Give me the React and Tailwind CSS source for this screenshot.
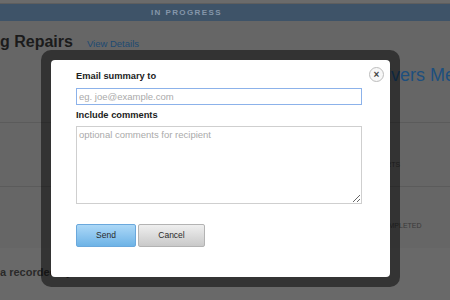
export default function App() {
  return (
    <div className="relative w-[450px] h-[300px] overflow-hidden bg-[#666] font-['Liberation_Sans',Arial,sans-serif] flex flex-col">
      {/* background page (dimmed) */}
      <div className="h-[4px] bg-[#6b6b6b] border-b border-[#5e5e5e] shrink-0" />
      <div className="h-[17px] shrink-0 bg-[#3e5368] flex items-center pl-[151px] text-[8px] font-bold tracking-[1.4px] text-[#8596aa] whitespace-nowrap">
        IN PROGRESS
      </div>
      <div className="h-[102px] shrink-0 border-b border-[#5b5b5b] flex flex-col">
        <div className="flex items-baseline pt-[13px] whitespace-nowrap">
          <span className="text-[16px] leading-[16px] font-bold text-[#1b1b1b]">g Repairs</span>
          <span className="ml-[14px] text-[9.5px] text-[#1e4a72]">View Details</span>
        </div>
        <div className="mt-[14px] pl-[368px] whitespace-nowrap text-[18px] leading-[20px] text-[#1d4f7e]">
          Drivers Meeting
        </div>
      </div>
      <div className="h-[64px] shrink-0 border-b border-[#5b5b5b] pt-[38px] pl-[373px] text-[7px] leading-[8px] text-[#3a3a3a] whitespace-nowrap">
        ALERTS
      </div>
      <div className="h-[61px] shrink-0 pt-[35px] pl-[378px] text-[7px] leading-[8px] text-[#3a3a3a] whitespace-nowrap">
        COMPLETED
      </div>
      <div className="flex-1 bg-[#696969] pt-[18px] whitespace-nowrap text-[11px] leading-[13px] font-bold text-[#2a2a2a]">
        a recorded by
      </div>

      {/* modal */}
      <div className="absolute left-[41px] top-[50px] w-[359px] h-[237px] rounded-[10px] bg-black/50 p-[10px]">
        <div className="relative h-full rounded-[4px] bg-white pl-[25px] pt-[10px]">
          <button className="absolute right-[6px] top-[7px] w-[15px] h-[15px] rounded-full border border-[#bdbdbd] bg-[#f7f7f7] flex items-center justify-center text-[10px] leading-none font-bold text-[#444]">
            ×
          </button>
          <div className="text-[9.3px] leading-[13px] font-bold text-[#222]">Email summary to</div>
          <input
            className="mt-[5px] block w-[286px] h-[17px] border border-[#8cb2ea] px-[2px] text-[9.5px] text-[#333] placeholder:text-[#aaa] outline-none"
            placeholder="eg. joe@example.com"
          />
          <div className="mt-[4px] text-[9.3px] leading-[13px] font-bold text-[#222]">Include comments</div>
          <textarea
            className="mt-[4px] block w-[286px] h-[78px] border border-[#cfcfcf] px-[2px] pt-[2px] text-[9.5px] leading-[11px] text-[#333] placeholder:text-[#aaa] outline-none"
            placeholder="optional comments for recipient"
          />
          <div className="mt-[20px] flex gap-[2px]">
            <button className="w-[60px] h-[23px] rounded-[2px] border border-[#6aa8dc] bg-gradient-to-b from-[#acd8f7] to-[#6db3e6] text-[8.5px] text-[#2a2a2a]">
              Send
            </button>
            <button className="w-[67px] h-[23px] rounded-[2px] border border-[#b3b3b3] bg-gradient-to-b from-[#efefef] to-[#c9c9c9] text-[8.5px] text-[#2a2a2a]">
              Cancel
            </button>
          </div>
        </div>
      </div>
    </div>
  );
}
